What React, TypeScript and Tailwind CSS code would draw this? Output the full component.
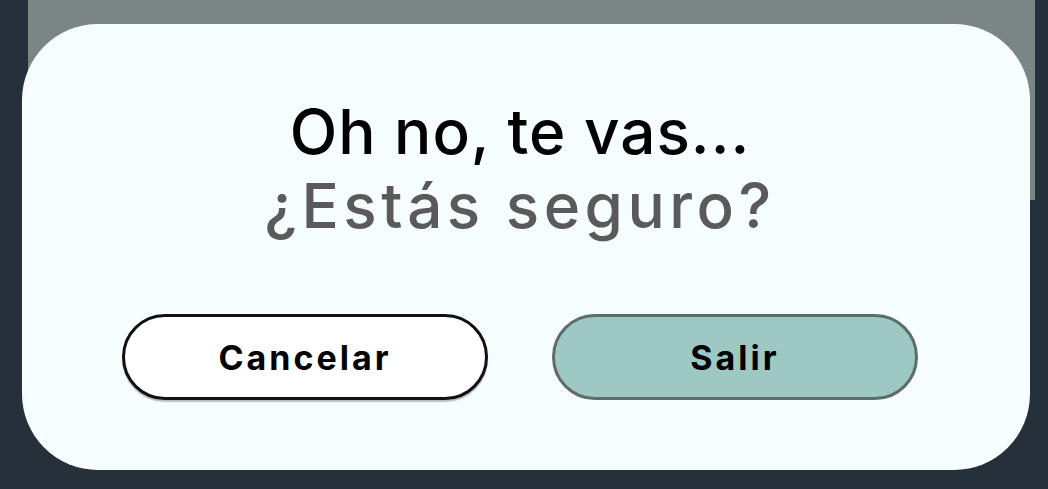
export default function App() {
  return (
    <div className="relative h-[489px] w-[1048px] overflow-hidden bg-[#25303a]">
      {/* dimmed screen behind the dialog */}
      <div className="absolute left-[28px] top-0 h-[200px] w-[1007px] bg-[#7a8586]" />

      <div className="relative pl-[22px] pt-[24px]">
        <div
          className="flex h-[446px] w-[1008px] flex-col items-center rounded-[76px] bg-[#f6fdff] pl-[100px] pr-[112px] pt-[71px]"
          style={{ fontFamily: 'Inter, "Noto Sans", sans-serif' }}
        >
          <h1 className="text-center text-[62px] font-medium leading-[74px] tracking-[1px] text-black">
            Oh no, te vas...
          </h1>
          <p className="text-center text-[62px] font-medium leading-[74px] tracking-[4.5px] text-[#5a5a5a]">
            ¿Estás seguro?
          </p>

          <div className="mt-[71px] flex w-full gap-[64px]">
            <button className="flex h-[86px] flex-1 items-center justify-center rounded-full border-[3px] border-[#111] bg-white text-[34px] font-bold tracking-[3px] text-black shadow-[0_2px_1px_rgba(0,0,0,0.25)]">
              Cancelar
            </button>
            <button className="flex h-[86px] flex-1 items-center justify-center rounded-full border-[3px] border-[#5e6c6a] bg-[#9dc8c3] text-[34px] font-bold tracking-[3px] text-black">
              Salir
            </button>
          </div>
        </div>
      </div>
    </div>
  );
}
